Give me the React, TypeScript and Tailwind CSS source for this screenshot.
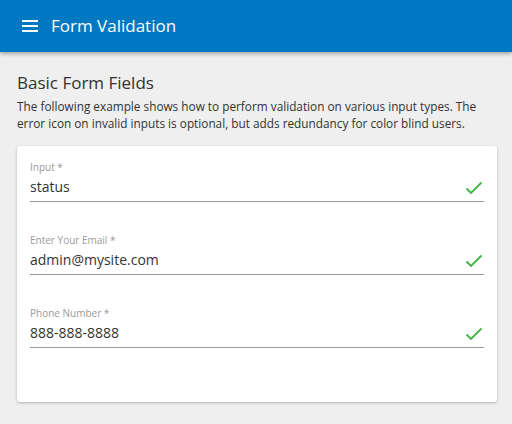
import React from "react";

function Check() {
  return (
    <svg width="18" height="14" viewBox="0 0 18 14" className="shrink-0">
      <path d="M1.5 7.5 L6 12 L16.5 1.5" fill="none" stroke="#3fb53f" strokeWidth="1.8" />
    </svg>
  );
}

function Field({ label, value }: { label: string; value: string }) {
  return (
    <div className="flex flex-col">
      <div className="text-[10px] leading-[12px] text-[#9a9a9a] h-[12px]">{label}</div>
      <div className="flex items-center justify-between h-[22px] mt-[3px] border-b border-[#9a9a9a] pb-[3px] box-content">
        <span className="text-[14px] leading-[20px] text-[#333]">{value}</span>
        <span className="mr-[1px] mt-[2px]"><Check /></span>
      </div>
    </div>
  );
}

export default function App() {
  return (
    <div className="w-[512px] h-[424px] bg-[#eeefee] overflow-hidden" style={{ fontFamily: '"Open Sans", sans-serif' }}>
      <div className="h-[52px] bg-[#0078c2] flex items-center shadow-[0_2px_4px_rgba(0,0,0,0.3)] relative">
        <div className="ml-[22px] w-[16px] flex flex-col gap-[3px]">
          <div className="h-[2px] bg-white" />
          <div className="h-[2px] bg-white" />
          <div className="h-[2px] bg-white" />
        </div>
        <div className="ml-[13px] text-white text-[17px] leading-[24px]">Form Validation</div>
      </div>
      <div className="px-[17px] pt-[20px]">
        <div className="text-[17px] leading-[22px] text-[#333]">Basic Form Fields</div>
        <div className="text-[11.8px] leading-[17px] text-[#333] mt-[4px]">
          The following example shows how to perform validation on various input types. The error icon on invalid inputs is optional, but adds redundancy for color blind users.
        </div>
        <div className="mt-[14px] w-[480px] h-[256px] bg-white rounded-[3px] shadow-[0_1px_3px_rgba(0,0,0,0.25)] px-[13px] pt-[15px] flex flex-col gap-[32px]">
          <Field label="Input *" value="status" />
          <Field label="Enter Your Email *" value="admin@mysite.com" />
          <Field label="Phone Number *" value="888-888-8888" />
        </div>
      </div>
    </div>
  );
}
